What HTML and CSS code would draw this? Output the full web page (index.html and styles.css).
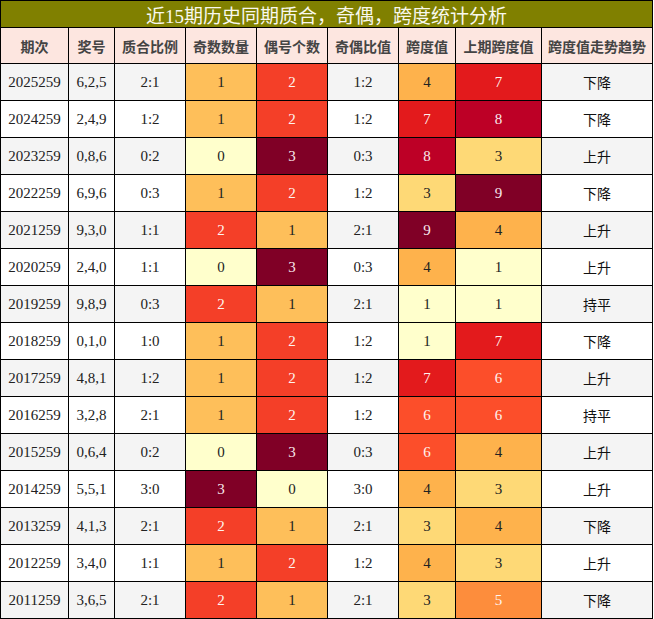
FILE: index.html
```html
<!DOCTYPE html>
<html lang="zh">
<head>
<meta charset="utf-8">
<title>近15期历史同期质合，奇偶，跨度统计分析</title>
<link rel="stylesheet" href="styles.css">
</head>
<body>
<div class="sheet">
  <div class="title">近15期历史同期质合，奇偶，跨度统计分析</div>
  <div class="hd">期次</div><div class="hd">奖号</div><div class="hd">质合比例</div><div class="hd">奇数数量</div><div class="hd">偶号个数</div><div class="hd">奇偶比值</div><div class="hd">跨度值</div><div class="hd">上期跨度值</div><div class="hd">跨度值走势趋势</div>

  <div class="n g">2025259</div><div class="n g">6,2,5</div><div class="n g">2:1</div><div class="n o1">1</div><div class="n o2">2</div><div class="n g">1:2</div><div class="n s4">4</div><div class="n s7">7</div><div class="t g">下降</div>
  <div class="n">2024259</div><div class="n">2,4,9</div><div class="n">1:2</div><div class="n o1">1</div><div class="n o2">2</div><div class="n">1:2</div><div class="n s7">7</div><div class="n s8">8</div><div class="t">下降</div>
  <div class="n g">2023259</div><div class="n g">0,8,6</div><div class="n g">0:2</div><div class="n o0">0</div><div class="n o3">3</div><div class="n g">0:3</div><div class="n s8">8</div><div class="n s3">3</div><div class="t g">上升</div>
  <div class="n">2022259</div><div class="n">6,9,6</div><div class="n">0:3</div><div class="n o1">1</div><div class="n o2">2</div><div class="n">1:2</div><div class="n s3">3</div><div class="n s9">9</div><div class="t">下降</div>
  <div class="n g">2021259</div><div class="n g">9,3,0</div><div class="n g">1:1</div><div class="n o2">2</div><div class="n o1">1</div><div class="n g">2:1</div><div class="n s9">9</div><div class="n s4">4</div><div class="t g">上升</div>
  <div class="n">2020259</div><div class="n">2,4,0</div><div class="n">1:1</div><div class="n o0">0</div><div class="n o3">3</div><div class="n">0:3</div><div class="n s4">4</div><div class="n s1">1</div><div class="t">上升</div>
  <div class="n g">2019259</div><div class="n g">9,8,9</div><div class="n g">0:3</div><div class="n o2">2</div><div class="n o1">1</div><div class="n g">2:1</div><div class="n s1">1</div><div class="n s1">1</div><div class="t g">持平</div>
  <div class="n">2018259</div><div class="n">0,1,0</div><div class="n">1:0</div><div class="n o1">1</div><div class="n o2">2</div><div class="n">1:2</div><div class="n s1">1</div><div class="n s7">7</div><div class="t">下降</div>
  <div class="n g">2017259</div><div class="n g">4,8,1</div><div class="n g">1:2</div><div class="n o1">1</div><div class="n o2">2</div><div class="n g">1:2</div><div class="n s7">7</div><div class="n s6">6</div><div class="t g">上升</div>
  <div class="n">2016259</div><div class="n">3,2,8</div><div class="n">2:1</div><div class="n o1">1</div><div class="n o2">2</div><div class="n">1:2</div><div class="n s6">6</div><div class="n s6">6</div><div class="t">持平</div>
  <div class="n g">2015259</div><div class="n g">0,6,4</div><div class="n g">0:2</div><div class="n o0">0</div><div class="n o3">3</div><div class="n g">0:3</div><div class="n s6">6</div><div class="n s4">4</div><div class="t g">上升</div>
  <div class="n">2014259</div><div class="n">5,5,1</div><div class="n">3:0</div><div class="n o3">3</div><div class="n o0">0</div><div class="n">3:0</div><div class="n s4">4</div><div class="n s3">3</div><div class="t">上升</div>
  <div class="n g">2013259</div><div class="n g">4,1,3</div><div class="n g">2:1</div><div class="n o2">2</div><div class="n o1">1</div><div class="n g">2:1</div><div class="n s3">3</div><div class="n s4">4</div><div class="t g">下降</div>
  <div class="n">2012259</div><div class="n">3,4,0</div><div class="n">1:1</div><div class="n o1">1</div><div class="n o2">2</div><div class="n">1:2</div><div class="n s4">4</div><div class="n s3">3</div><div class="t">上升</div>
  <div class="n g">2011259</div><div class="n g">3,6,5</div><div class="n g">2:1</div><div class="n o2">2</div><div class="n o1">1</div><div class="n g">2:1</div><div class="n s3">3</div><div class="n s5">5</div><div class="t g">下降</div>
</div>
</body>
</html>
```

FILE: styles.css
```css
html, body {
  margin: 0;
  padding: 0;
  background: #ffffff;
}

.sheet {
  display: grid;
  width: 653px;
  box-sizing: border-box;
  grid-template-columns: 67px 45px 70px 70px 70px 70px 56px 85px 110px;
  grid-template-rows: 26px 35px repeat(15, 36px);
  gap: 1px;
  padding: 1px;
  background: #000000;
}

.sheet > div {
  display: flex;
  align-items: center;
  justify-content: center;
  background: #ffffff;
  color: #222222;
}

.sheet > .title {
  grid-column: 1 / -1;
  background: #808000;
  color: #f8f8ee;
  font-family: "Liberation Serif", "Noto Sans CJK SC", serif;
  font-size: 19px;
  padding-top: 1px;
}

.sheet > .hd {
  background: #fde6e0;
  color: #444444;
  font-family: "Noto Sans CJK SC", sans-serif;
  font-weight: bold;
  font-size: 14px;
}

.sheet > .n {
  font-family: "Liberation Serif", "Noto Sans CJK SC", serif;
  font-size: 15px;
}

.sheet > .t {
  font-family: "Noto Sans CJK SC", sans-serif;
  font-size: 14px;
  color: #111111;
}

.sheet > .g { background: #f4f4f4; }

.sheet > .o0 { background: #ffffcc; }
.sheet > .o1 { background: #febf5a; }
.sheet > .o2 { background: #f43f28; color: #fff4f0; }
.sheet > .o3 { background: #800026; color: #f8e8ec; }

.sheet > .s1 { background: #ffffcc; }
.sheet > .s3 { background: #fed976; }
.sheet > .s4 { background: #feb24c; }
.sheet > .s5 { background: #fd8d3c; color: #fff4f0; }
.sheet > .s6 { background: #fc4e2a; color: #fff4f0; }
.sheet > .s7 { background: #e31a1c; color: #fff4f0; }
.sheet > .s8 { background: #bd0026; color: #f8e8ec; }
.sheet > .s9 { background: #800026; color: #f8e8ec; }
```
